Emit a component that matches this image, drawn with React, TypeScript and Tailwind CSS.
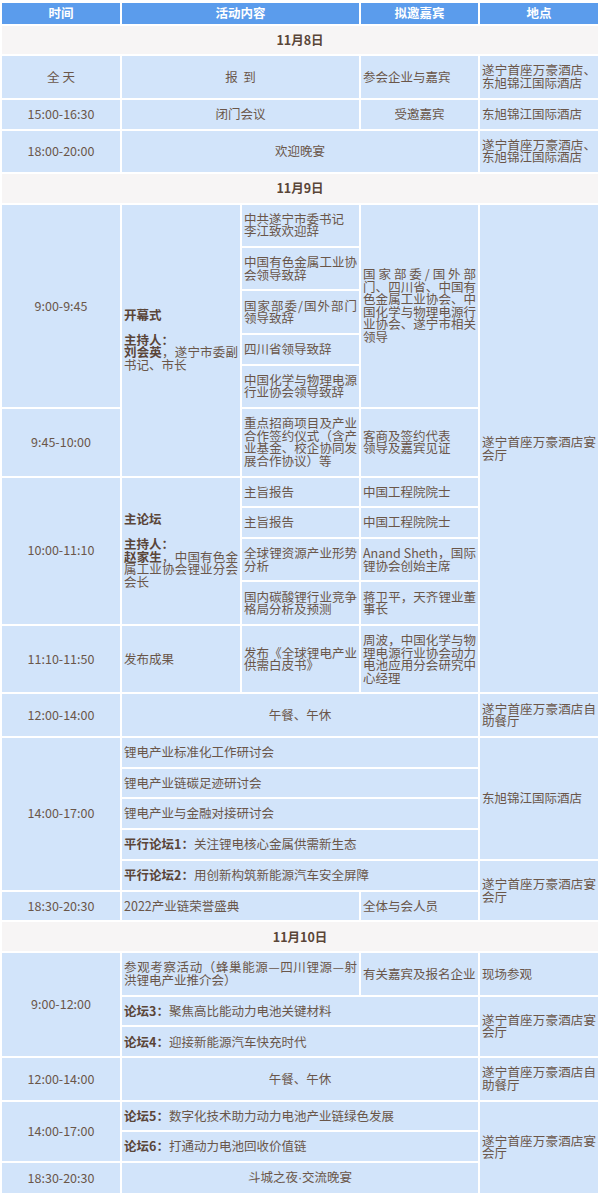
import React from 'react';

interface CellProps {
  children?: React.ReactNode;
  rowSpan?: number;
  colSpan?: number;
  center?: boolean;
}

// plain light-blue cell; left cells are justified like the original sheet
const Cell: React.FC<CellProps> = ({ children, rowSpan, colSpan, center }) => (
  <td
    rowSpan={rowSpan}
    colSpan={colSpan}
    className={
      center
        ? 'bg-[#d2e4fa] px-[2px] py-[8.1px] align-middle text-center whitespace-pre-wrap'
        : 'bg-[#d2e4fa] px-[2px] py-[8.1px] align-middle text-justify'
    }
  >
    {children}
  </td>
);

const DateRow: React.FC<{ label: string }> = ({ label }) => (
  <tr>
    <td colSpan={5} className="bg-[#f7f5f5] py-[8.1px] text-center align-middle font-bold text-[#5a4538]">
      {label}
    </td>
  </tr>
);

const B: React.FC<{ children: React.ReactNode }> = ({ children }) => (
  <b className="font-bold text-[#5a4538]">{children}</b>
);

const headers = ['时间', '活动内容', '拟邀嘉宾', '地点'];

const App: React.FC = () => {
  return (
    <div className="w-[600px] bg-white pt-px font-['Noto_Sans_CJK_SC','Microsoft_YaHei',sans-serif] text-[12.5px] leading-[12.6px] text-[#6a5649]">
      <table className="w-[600px] table-fixed border-separate border-spacing-[2px]">
        <colgroup>
          <col className="w-[118px]" />
          <col className="w-[118px]" />
          <col className="w-[117px]" />
          <col className="w-[117px]" />
          <col className="w-[118px]" />
        </colgroup>
        <thead>
          <tr>
            {headers.map((h, i) => (
              <th
                key={h}
                colSpan={i === 1 ? 2 : 1}
                className="bg-[#5b9cec] py-1 text-center align-middle font-bold text-white"
              >
                {h}
              </th>
            ))}
          </tr>
        </thead>
        <tbody>
          {/* 11月8日 */}
          <DateRow label="11月8日" />
          <tr>
            <Cell center>全 天</Cell>
            <Cell center colSpan={2}>{'报  到'}</Cell>
            <Cell>参会企业与嘉宾</Cell>
            <Cell>遂宁首座万豪酒店、东旭锦江国际酒店</Cell>
          </tr>
          <tr>
            <Cell center>15:00-16:30</Cell>
            <Cell center colSpan={2}>闭门会议</Cell>
            <Cell center>受邀嘉宾</Cell>
            <Cell>东旭锦江国际酒店</Cell>
          </tr>
          <tr>
            <Cell center>18:00-20:00</Cell>
            <Cell center colSpan={3}>欢迎晚宴</Cell>
            <Cell>遂宁首座万豪酒店、东旭锦江国际酒店</Cell>
          </tr>

          {/* 11月9日 */}
          <DateRow label="11月9日" />
          <tr>
            <Cell center rowSpan={5}>9:00-9:45</Cell>
            <Cell rowSpan={6}>
              <B>开幕式</B>
              <br />
              <br />
              <B>主持人：</B>
              <br />
              <B>刘会英</B>，遂宁市委副书记、市长
            </Cell>
            <Cell>
              中共遂宁市委书记
              <br />
              李江致欢迎辞
            </Cell>
            <Cell rowSpan={5}>
              国家部委/国外部门、四川省、中国有色金属工业协会、中国化学与物理电源行业协会、遂宁市相关领导
            </Cell>
            <Cell rowSpan={11}>遂宁首座万豪酒店宴会厅</Cell>
          </tr>
          <tr>
            <Cell>中国有色金属工业协会领导致辞</Cell>
          </tr>
          <tr>
            <Cell>国家部委/国外部门领导致辞</Cell>
          </tr>
          <tr>
            <Cell>四川省领导致辞</Cell>
          </tr>
          <tr>
            <Cell>中国化学与物理电源行业协会领导致辞</Cell>
          </tr>
          <tr>
            <Cell center>9:45-10:00</Cell>
            <Cell>重点招商项目及产业合作签约仪式（含产业基金、校企协同发展合作协议）等</Cell>
            <Cell>
              客商及签约代表
              <br />
              领导及嘉宾见证
            </Cell>
          </tr>
          <tr>
            <Cell center rowSpan={4}>10:00-11:10</Cell>
            <Cell rowSpan={4}>
              <B>主论坛</B>
              <br />
              <br />
              <B>主持人：</B>
              <br />
              <B>赵家生</B>，中国有色金属工业协会锂业分会会长
            </Cell>
            <Cell>主旨报告</Cell>
            <Cell>中国工程院院士</Cell>
          </tr>
          <tr>
            <Cell>主旨报告</Cell>
            <Cell>中国工程院院士</Cell>
          </tr>
          <tr>
            <Cell>全球锂资源产业形势分析</Cell>
            <Cell>Anand Sheth，国际锂协会创始主席</Cell>
          </tr>
          <tr>
            <Cell>国内碳酸锂行业竞争格局分析及预测</Cell>
            <Cell>蒋卫平，天齐锂业董事长</Cell>
          </tr>
          <tr>
            <Cell center>11:10-11:50</Cell>
            <Cell>发布成果</Cell>
            <Cell>发布《全球锂电产业供需白皮书》</Cell>
            <Cell>周波，中国化学与物理电源行业协会动力电池应用分会研究中心经理</Cell>
          </tr>
          <tr>
            <Cell center>12:00-14:00</Cell>
            <Cell center colSpan={3}>午餐、午休</Cell>
            <Cell>遂宁首座万豪酒店自助餐厅</Cell>
          </tr>
          <tr>
            <Cell center rowSpan={5}>14:00-17:00</Cell>
            <Cell colSpan={3}>锂电产业标准化工作研讨会</Cell>
            <Cell rowSpan={4}>东旭锦江国际酒店</Cell>
          </tr>
          <tr>
            <Cell colSpan={3}>锂电产业链碳足迹研讨会</Cell>
          </tr>
          <tr>
            <Cell colSpan={3}>锂电产业与金融对接研讨会</Cell>
          </tr>
          <tr>
            <Cell colSpan={3}>
              <B>平行论坛1：</B>关注锂电核心金属供需新生态
            </Cell>
          </tr>
          <tr>
            <Cell colSpan={3}>
              <B>平行论坛2：</B>用创新构筑新能源汽车安全屏障
            </Cell>
            <Cell rowSpan={2}>遂宁首座万豪酒店宴会厅</Cell>
          </tr>
          <tr>
            <Cell center>18:30-20:30</Cell>
            <Cell colSpan={2}>2022产业链荣誉盛典</Cell>
            <Cell>全体与会人员</Cell>
          </tr>

          {/* 11月10日 */}
          <DateRow label="11月10日" />
          <tr>
            <Cell center rowSpan={3}>9:00-12:00</Cell>
            <Cell colSpan={2}>参观考察活动（蜂巢能源—四川锂源—射洪锂电产业推介会）</Cell>
            <Cell>有关嘉宾及报名企业</Cell>
            <Cell>现场参观</Cell>
          </tr>
          <tr>
            <Cell colSpan={3}>
              <B>论坛3：</B>聚焦高比能动力电池关键材料
            </Cell>
            <Cell rowSpan={2}>遂宁首座万豪酒店宴会厅</Cell>
          </tr>
          <tr>
            <Cell colSpan={3}>
              <B>论坛4：</B>迎接新能源汽车快充时代
            </Cell>
          </tr>
          <tr>
            <Cell center>12:00-14:00</Cell>
            <Cell center colSpan={3}>午餐、午休</Cell>
            <Cell>遂宁首座万豪酒店自助餐厅</Cell>
          </tr>
          <tr>
            <Cell center rowSpan={2}>14:00-17:00</Cell>
            <Cell colSpan={3}>
              <B>论坛5：</B>数字化技术助力动力电池产业链绿色发展
            </Cell>
            <Cell rowSpan={3}>遂宁首座万豪酒店宴会厅</Cell>
          </tr>
          <tr>
            <Cell colSpan={3}>
              <B>论坛6：</B>打通动力电池回收价值链
            </Cell>
          </tr>
          <tr>
            <Cell center>18:30-20:30</Cell>
            <Cell center colSpan={3}>
              斗城之夜<span className="font-['Liberation_Sans',sans-serif]">·</span>交流晚宴
            </Cell>
          </tr>
        </tbody>
      </table>
    </div>
  );
};

export default App;
